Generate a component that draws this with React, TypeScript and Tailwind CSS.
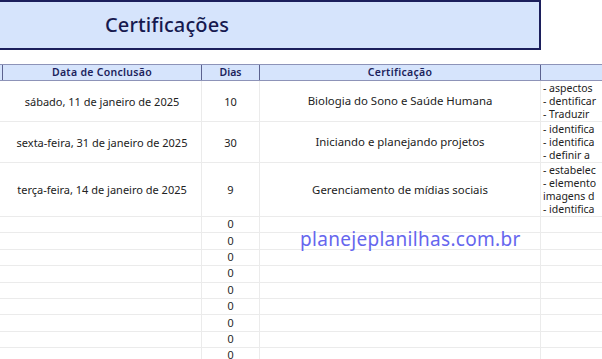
import React from "react";

const rows = [
  {
    date: "sábado, 11 de janeiro de 2025",
    dias: "10",
    cert: "Biologia do Sono e Saúde Humana",
    notes: ["- aspectos", "- dentificar", "- Traduzir"],
    h: "h-[41px]",
  },
  {
    date: "sexta-feira, 31 de janeiro de 2025",
    dias: "30",
    cert: "Iniciando e planejando projetos",
    notes: ["-  identifica", "- identifica", "- definir a"],
    h: "h-[41px]",
  },
  {
    date: "terça-feira, 14 de janeiro de 2025",
    dias: "9",
    cert: "Gerenciamento de mídias sociais",
    notes: ["- estabelec", "-  elemento", "imagens d", "- identifica"],
    h: "h-[54px]",
  },
];

const font = { fontFamily: "'Noto Sans', sans-serif" };

export default function App() {
  return (
    <div className="w-[602px] h-[359px] overflow-hidden bg-white relative" style={font}>
      <div className="h-[50px] w-[541px] bg-[#d6e4fc] border-t-2 border-b-2 border-r-2 border-[#1c1f5c] flex items-center pl-[105px]">
        <span className="text-[20px] font-medium text-[#16194f] tracking-[0.1px]">Certificações</span>
      </div>
      <div className="h-[14px]" />
      <div className="flex h-[17px] bg-[#d6e4fc] border-t border-b border-[#8d93b8] text-[10.5px] font-semibold text-[#1c1f5c] leading-none">
        <div className="w-[3px] border-r border-[#5c628f]" />
        <div className="w-[199px] border-r border-[#5c628f] flex items-center justify-center tracking-[0.3px]">Data de Conclusão</div>
        <div className="w-[58px] border-r border-[#5c628f] flex items-center justify-center">Dias</div>
        <div className="w-[281px] border-r border-[#5c628f] flex items-center justify-center tracking-[0.3px]">Certificação</div>
        <div className="flex-1" />
      </div>
      {rows.map((r, i) => (
        <div key={i} className={`flex ${r.h} border-b border-[#ebebeb] text-[11px] text-[#222] leading-none`}>
          <div className="w-[3px]" />
          <div className="w-[199px] border-r border-[#ebebeb] flex items-center justify-center whitespace-nowrap">{r.date}</div>
          <div className="w-[58px] border-r border-[#ebebeb] flex items-center justify-center">{r.dias}</div>
          <div className="w-[281px] border-r border-[#ebebeb] flex items-center justify-center whitespace-nowrap text-[11.4px]">{r.cert}</div>
          <div className="flex-1 flex flex-col justify-center pl-[2px] leading-[13px] text-[10.5px] whitespace-nowrap overflow-hidden">
            {r.notes.map((n, j) => (
              <div key={j}>{n}</div>
            ))}
          </div>
        </div>
      ))}
      {Array.from({ length: 9 }).map((_, i) => (
        <div key={i} className="flex h-[16.4px] border-b border-[#ebebeb] text-[11px] text-[#222] leading-none">
          <div className="w-[3px]" />
          <div className="w-[199px] border-r border-[#ebebeb]" />
          <div
            className="w-[58px] border-r border-[#ebebeb] flex items-center justify-center"
            style={{ fontFamily: "'Liberation Sans', Arial, sans-serif" }}
          >
            0
          </div>
          <div className="w-[281px] border-r border-[#ebebeb]" />
          <div className="flex-1" />
        </div>
      ))}
      <div className="absolute left-[300px] top-[230px] text-[19px] text-[#6666ee] leading-none tracking-[0.3px]">
        planejeplanilhas.com.br
      </div>
    </div>
  );
}
